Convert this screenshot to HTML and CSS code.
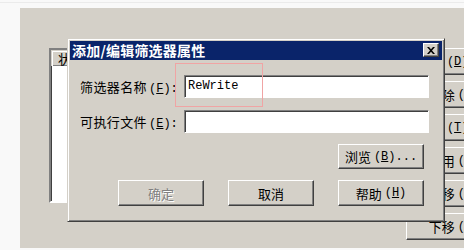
FILE: index.html
```html
<!DOCTYPE html>
<html>
<head>
    <meta charset="utf-8">
    <link rel="stylesheet" href="styles.css">
</head>
<body>
    <div class="top"></div>
    <div class="panel">
        <div class="rule"></div>
        <div class="page">
            <div class="list">
                <div class="list-head">
                    <div class="col">状态</div>
                </div>
            </div>
            <div class="side">
                <div class="btn side-btn">添加<span class="key">(<u>D</u>)...</span></div>
                <div class="btn side-btn">删除<span class="key">(<u>R</u>)</span></div>
                <div class="btn side-btn">编辑<span class="key">(<u>T</u>)...</span></div>
                <div class="btn side-btn">禁用<span class="key">(<u>B</u>)</span></div>
                <div class="btn side-btn">上移<span class="key">(<u>U</u>)</span></div>
                <div class="btn side-btn">下移<span class="key">(<u>O</u>)</span></div>
            </div>
        </div>

        <div class="dialog">
            <div class="titlebar">
                <span class="title">添加/编辑筛选器属性</span>
                <div class="close">
                    <svg width="8" height="7" viewBox="0 0 8 7">
                        <path d="M0 0h2l2 2.3 2-2.3h2l-3 3.5 3 3.5h-2l-2-2.3-2 2.3h-2l3-3.5z" fill="#000"/>
                    </svg>
                </div>
            </div>
            <div class="dlg-body">
                <div class="row">
                    <label class="label">筛选器名称<span class="key">(<u>F</u>):</span></label>
                    <div class="field">ReWrite</div>
                </div>
                <div class="row row-gap">
                    <label class="label">可执行文件<span class="key">(<u>E</u>):</span></label>
                    <div class="field"></div>
                </div>
                <div class="browse-row">
                    <div class="btn dlg-btn">浏览<span class="key">(<u>B</u>)...</span></div>
                </div>
                <div class="actions">
                    <div class="btn dlg-btn disabled">确定</div>
                    <div class="btn dlg-btn">取消</div>
                    <div class="btn dlg-btn">帮助<span class="key">(<u>H</u>)</span></div>
                </div>
            </div>
            <div class="mark"></div>
        </div>
    </div>
</body>
</html>
```

FILE: styles.css
```css
body {
    margin: 0;
    background: #f9f9f9;
    font-family: "Noto Sans CJK SC", "Liberation Sans", sans-serif;
    font-size: 13px;
    color: #000;
    overflow: hidden;
}
.key {
    font-family: "Liberation Mono", monospace;
    font-size: 12px;
    margin-left: 3px;
}
.top {
    height: 5px;
    margin-top: 2px;
    border-top: 1px solid #ebebeb;
}
.panel {
    position: relative;
    margin-left: 20px;
    height: 240px;
    background: #d4d0c8;
    display: flex;
}
.rule {
    margin-left: 15px;
    width: 1px;
    background: #888;
}
.page {
    display: flex;
    padding: 40px 0 0 14px;
}
.list {
    width: 346px;
    height: 151px;
    background: #fff;
    border: 2px solid;
    border-color: #808080 #fff #fff #808080;
    box-shadow: inset 1px 1px #404040;
}
.list-head {
    height: 15px;
    background: #d4d0c8;
    display: flex;
    padding: 1px 0 0 1px;
}
.col {
    width: 90px;
    padding-left: 5px;
    line-height: 14px;
    border-top: 1px solid #fff;
    border-left: 1px solid #fff;
    box-shadow: inset -1px -1px #808080;
}
.btn {
    box-sizing: border-box;
    background: #d4d0c8;
    border: 1px solid;
    border-color: #fff #404040 #404040 #fff;
    box-shadow: inset -1px -1px #808080;
    display: flex;
    align-items: center;
    justify-content: center;
    white-space: nowrap;
}
.side {
    display: flex;
    flex-direction: column;
    gap: 6px;
    margin-left: 7px;
}
.side-btn {
    width: 96px;
    height: 27px;
}

/* dialog floating above the page */
.dialog {
    position: absolute;
    left: 47px;
    top: 30px;
    width: 378px;
    height: 184px;
    box-sizing: border-box;
    padding: 2px;
    border: 1px solid;
    border-color: #d4d0c8 #404040 #404040 #d4d0c8;
    box-shadow: inset 1px 1px #fff, inset -1px -1px #808080;
    background: #d4d0c8;
}
.titlebar {
    height: 19px;
    background: #0a246a;
    display: flex;
    align-items: center;
    justify-content: space-between;
    padding: 0 3px 0 2px;
}
.title {
    color: #fff;
    font-weight: bold;
    font-size: 14px;
    letter-spacing: 0.2px;
    line-height: 19px;
}
.close {
    box-sizing: border-box;
    width: 16px;
    height: 14px;
    margin-top: -1px;
    background: #d4d0c8;
    border: 1px solid;
    border-color: #fff #404040 #404040 #fff;
    box-shadow: inset -1px -1px #808080;
    display: flex;
    align-items: center;
    justify-content: center;
}
.dlg-body {
    padding: 15px 13px 0 10px;
}
.row {
    display: flex;
    align-items: center;
}
.row-gap {
    margin-top: 12px;
}
.label {
    width: 104px;
    white-space: nowrap;
    letter-spacing: 0.4px;
}
.label .key {
    margin-left: 2px;
    letter-spacing: 0;
}
.field {
    flex: 1;
    height: 23px;
    box-sizing: border-box;
    background: #fff;
    border: 1px solid;
    border-color: #808080 #fff #fff #808080;
    box-shadow: inset 1px 1px #404040;
    padding-left: 3px;
    font-family: "Liberation Mono", monospace;
    font-size: 12px;
    line-height: 21px;
}
.browse-row {
    display: flex;
    justify-content: flex-end;
    margin-top: 11px;
    padding-right: 5px;
}
.browse-row .dlg-btn {
    height: 25px;
}
.actions {
    display: flex;
    gap: 24px;
    margin-top: 11px;
    padding-left: 38px;
}
.dlg-btn {
    width: 86px;
    height: 26px;
}
.disabled {
    color: #808080;
    text-shadow: 1px 1px #fff;
}
.mark {
    position: absolute;
    left: 107px;
    top: 24px;
    width: 86px;
    height: 42px;
    border: 1px solid #f0a4a4;
}
```
